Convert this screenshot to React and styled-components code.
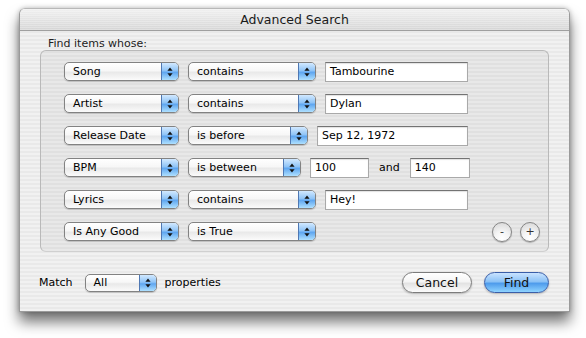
import React from "react";
import styled, { createGlobalStyle } from "styled-components";

const Global = createGlobalStyle`
  html, body {
    margin: 0;
    padding: 0;
    background: #ffffff;
  }
  body {
    font-family: "DejaVu Sans", "Liberation Sans", sans-serif;
    font-size: 11px;
    color: #000;
  }
`;

const Page = styled.div`
  padding: 8px 0 0 19px;
  width: 586px;
  height: 338px;
  box-sizing: border-box;
`;

const Window = styled.div`
  width: 551px;
  height: 304px;
  display: flex;
  flex-direction: column;
  border-radius: 6px 6px 0 0;
  overflow: hidden;
  background: repeating-linear-gradient(
    to bottom,
    #f1f1f1 0px,
    #f1f1f1 2px,
    #e9e9e9 2px,
    #e9e9e9 4px
  );
  box-shadow: 0 10px 14px rgba(0, 0, 0, 0.55), 0 0 5px rgba(0, 0, 0, 0.25);
  border: 1px solid #9a9a9a;
  border-top-color: #b8b8b8;
  box-sizing: border-box;
`;

const TitleBar = styled.div`
  height: 22px;
  flex: none;
  display: flex;
  align-items: center;
  justify-content: center;
  font-size: 12.5px;
  color: #1a1a1a;
  background:
    repeating-linear-gradient(
      to bottom,
      rgba(255, 255, 255, 0.25) 0px,
      rgba(255, 255, 255, 0.25) 1px,
      rgba(0, 0, 0, 0) 1px,
      rgba(0, 0, 0, 0) 2px
    ),
    linear-gradient(#f0f0f0, #d6d6d6);
  border-bottom: 1px solid #a0a0a0;
  box-sizing: border-box;
`;

const Content = styled.div`
  flex: 1;
  display: flex;
  flex-direction: column;
  padding: 0 20px 0 20px;
`;

const Caption = styled.div`
  padding: 6px 0 0 8px;
  height: 13px;
  line-height: 13px;
  color: #222;
`;

const Group = styled.div`
  margin-top: 0;
  height: 202px;
  box-sizing: border-box;
  border: 1px solid #b9b9b9;
  border-bottom-color: #d0d0d0;
  border-radius: 6px;
  background: rgba(0, 0, 0, 0.035);
  padding: 11px 8px 0 23px;
  display: flex;
  flex-direction: column;
  gap: 13px;
`;

const Row = styled.div`
  display: flex;
  align-items: center;
  gap: 9px;
  height: 19px;
`;

const PopupBox = styled.div`
  display: flex;
  align-items: stretch;
  width: ${(p) => p.$w}px;
  height: ${(p) => p.$h || 19}px;
  box-sizing: border-box;
  border: 1px solid #828282;
  border-radius: 5px;
  overflow: hidden;
  background: linear-gradient(#ffffff, #f7f7f7 45%, #e9e9e9 55%, #fbfbfb);
  box-shadow: 0 1px 1px rgba(0, 0, 0, 0.18);
  flex: none;
`;

const PopupLabel = styled.span`
  flex: 1;
  padding-left: 8px;
  display: flex;
  align-items: center;
  white-space: nowrap;
`;

const PopupArrows = styled.span`
  width: 16px;
  flex: none;
  border-left: 1px solid #4f78b3;
  display: flex;
  align-items: center;
  justify-content: center;
  background: linear-gradient(#d2e9ff, #8fc4f7 45%, #5fa6f0 55%, #aee0ff);
`;

const Arrows = () => (
  <svg width="6" height="10" viewBox="0 0 6 10">
    <path d="M3 0.5 L5.6 3.8 L0.4 3.8 Z" fill="#111" />
    <path d="M3 9.5 L5.6 6.2 L0.4 6.2 Z" fill="#111" />
  </svg>
);

const Popup = ({ w, h, children }) => (
  <PopupBox $w={w} $h={h}>
    <PopupLabel>{children}</PopupLabel>
    <PopupArrows>
      <Arrows />
    </PopupArrows>
  </PopupBox>
);

const Field = styled.div`
  width: ${(p) => p.$w}px;
  height: 20px;
  box-sizing: border-box;
  background: #ffffff;
  border: 1px solid #a9a9a9;
  border-top-color: #737373;
  box-shadow: inset 0 1px 1px rgba(0, 0, 0, 0.12);
  padding-left: 4px;
  display: flex;
  align-items: center;
  flex: none;
`;

const Word = styled.span`
  padding: 0 1px;
`;

const RoundControls = styled.div`
  margin-left: auto;
  display: flex;
  gap: 8px;
  align-self: center;
`;

const RoundButton = styled.div`
  width: 20px;
  height: 20px;
  box-sizing: border-box;
  border-radius: 50%;
  border: 1px solid #858585;
  background: radial-gradient(circle at 50% 85%, #ffffff 0%, #f4f4f4 40%, #d4d4d4 100%);
  box-shadow: 0 1px 1px rgba(0, 0, 0, 0.25);
  display: flex;
  align-items: center;
  justify-content: center;
  font-size: 11px;
  line-height: 1;
  color: #333;
`;

const BottomBar = styled.div`
  display: flex;
  align-items: center;
  margin-top: 20px;
  height: 21px;
  gap: 8px;
`;

const MatchLabel = styled.span`
  margin-left: -1px;
  margin-right: 4px;
`;

const Spacer = styled.div`
  flex: 1;
`;

const PushButton = styled.div`
  width: ${(p) => p.$w}px;
  height: 21px;
  box-sizing: border-box;
  border-radius: 11px;
  display: flex;
  align-items: center;
  justify-content: center;
  font-size: 12.5px;
  color: #111;
  margin-left: ${(p) => p.$ml || 0}px;
  border: 1px solid ${(p) => (p.$primary ? "#3a5ea8" : "#7c7c7c")};
  background: ${(p) =>
    p.$primary
      ? "linear-gradient(#c9e3ff, #8cc2f6 45%, #4f9cec 55%, #8fd3ff)"
      : "linear-gradient(#ffffff, #f5f5f5 45%, #e3e3e3 55%, #fbfbfb)"};
  box-shadow: 0 1px 2px rgba(0, 0, 0, 0.25);
`;

const rows = [
  { a: "Song", b: "contains", bw: 128, fields: [{ w: 143, v: "Tambourine" }] },
  { a: "Artist", b: "contains", bw: 128, fields: [{ w: 143, v: "Dylan" }] },
  { a: "Release Date", b: "is before", bw: 120, fields: [{ w: 151, v: "Sep 12, 1972" }] },
  {
    a: "BPM",
    b: "is between",
    bw: 113,
    fields: [
      { w: 59, v: "100" },
      { w: 60, v: "140" },
    ],
  },
  { a: "Lyrics", b: "contains", bw: 128, fields: [{ w: 143, v: "Hey!" }] },
];

export default function App() {
  return (
    <>
      <Global />
      <Page>
        <Window>
          <TitleBar>Advanced Search</TitleBar>
          <Content>
            <Caption>Find items whose:</Caption>
            <Group>
              {rows.map((r) => (
                <Row key={r.a}>
                  <Popup w={115}>{r.a}</Popup>
                  <Popup w={r.bw}>{r.b}</Popup>
                  {r.fields.length === 2 ? (
                    <>
                      <Field $w={r.fields[0].w}>{r.fields[0].v}</Field>
                      <Word>and</Word>
                      <Field $w={r.fields[1].w}>{r.fields[1].v}</Field>
                    </>
                  ) : (
                    <Field $w={r.fields[0].w}>{r.fields[0].v}</Field>
                  )}
                </Row>
              ))}
              <Row>
                <Popup w={115}>Is Any Good</Popup>
                <Popup w={128}>is True</Popup>
                <RoundControls>
                  <RoundButton>-</RoundButton>
                  <RoundButton>+</RoundButton>
                </RoundControls>
              </Row>
            </Group>
            <BottomBar>
              <MatchLabel>Match</MatchLabel>
              <Popup w={72} h={18}>All</Popup>
              <span>properties</span>
              <Spacer />
              <PushButton $w={70}>Cancel</PushButton>
              <PushButton $w={65} $ml={4} $primary>
                Find
              </PushButton>
            </BottomBar>
          </Content>
        </Window>
      </Page>
    </>
  );
}
